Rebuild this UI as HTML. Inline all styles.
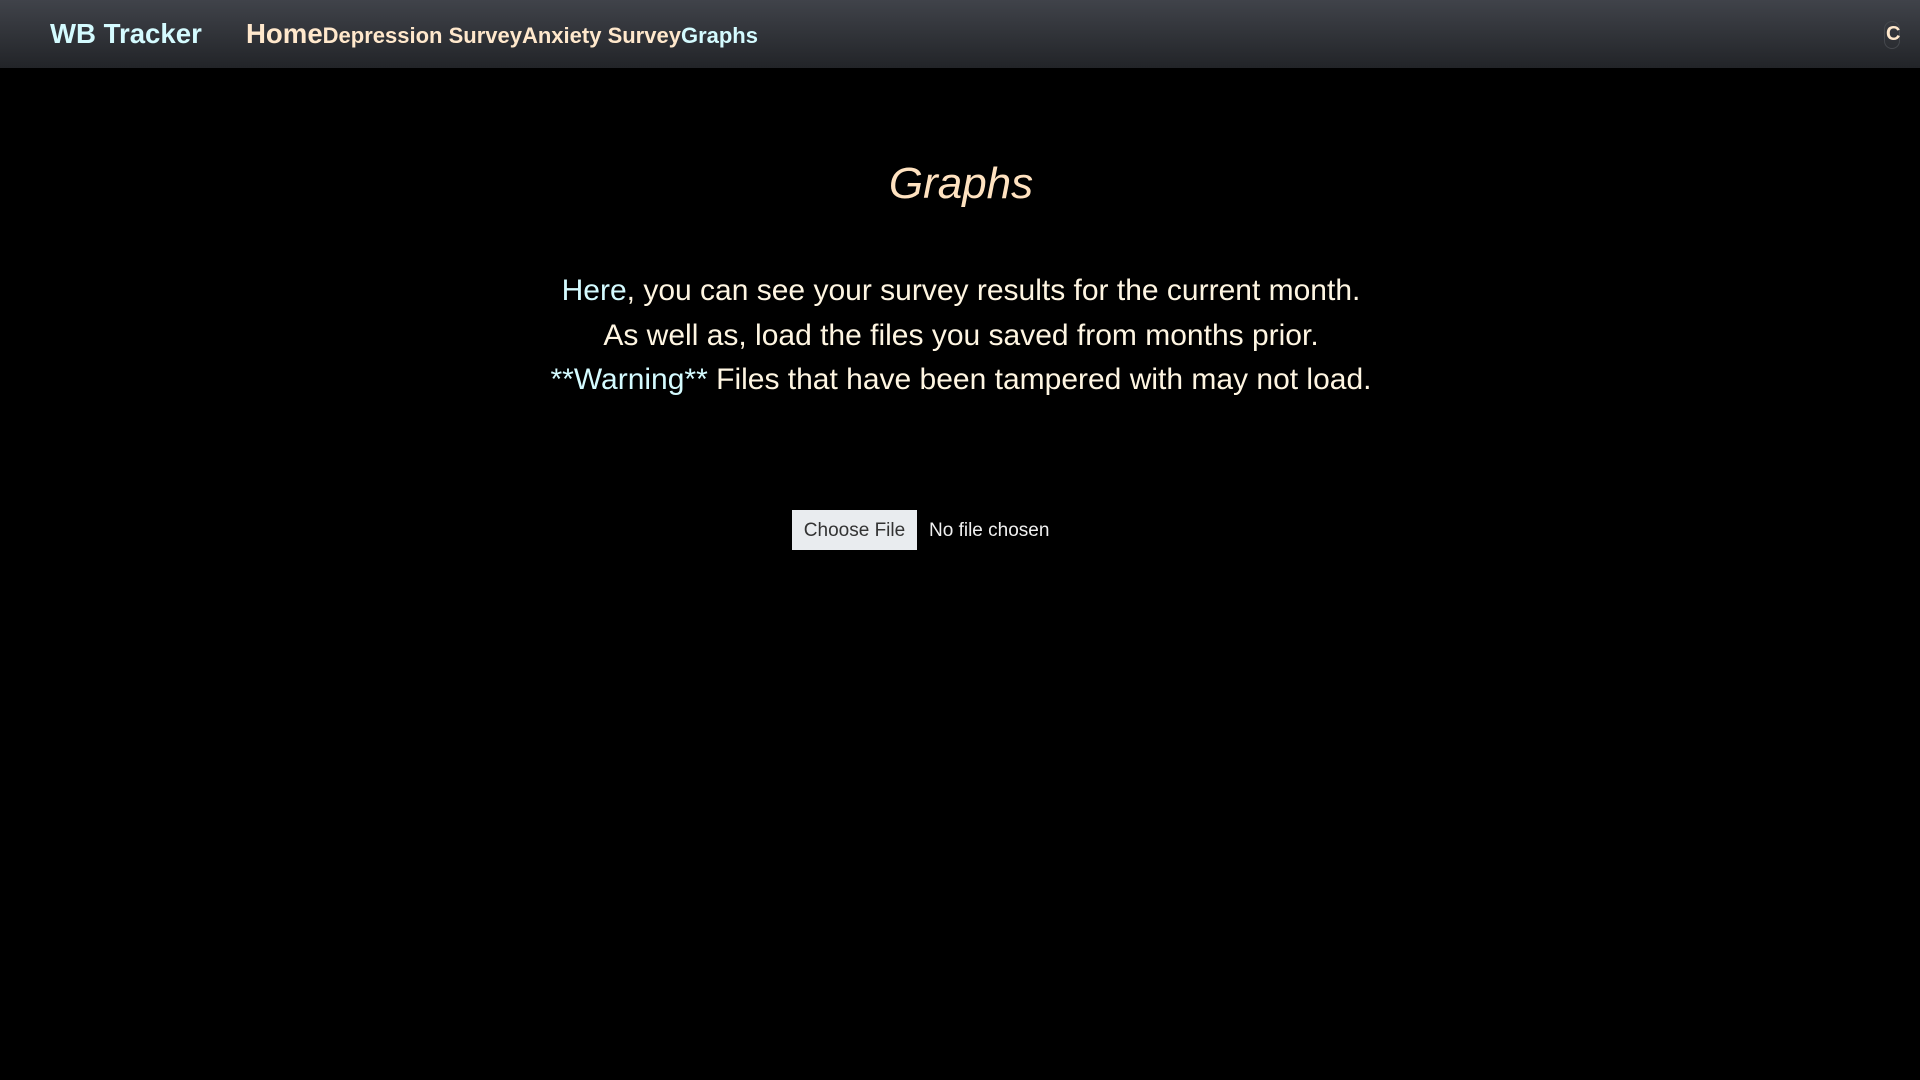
<!DOCTYPE html>
<html><head><meta charset="utf-8"><style>
*{margin:0;padding:0;box-sizing:border-box}
body{width:1920px;height:1080px;background:#000;font-family:"Liberation Sans",Arial,sans-serif;overflow:hidden;position:relative}
nav{position:absolute;left:0;top:0;width:1920px;height:68px;background:linear-gradient(#40434a,#222428)}
.t{position:absolute;white-space:nowrap;font-weight:bold}
.cy{color:#d4fbff}.bq{color:#ffe8cc}
p.l{position:absolute;left:0;width:1922px;text-align:center;font-size:30px;color:#fff6e2;white-space:nowrap}
</style></head><body>
<nav>
<div class="t cy" style="left:50px;top:18px;font-size:27.6px">WB Tracker</div>
<div class="t bq" style="left:246px;top:18px;font-size:27.6px">Home<span style="font-size:22px">Depression Survey</span><span style="font-size:22px">Anxiety Survey</span><span class="cy" style="font-size:22px">Graphs</span></div>
<div style="position:absolute;left:1884px;top:21px;width:16px;height:28px;border:1px solid #45484d;border-radius:8px"></div>
<div class="t bq" style="left:1886px;top:23px;font-size:20px">C</div>
</nav>
<div style="position:absolute;left:0;width:1922px;top:159px;text-align:center;font-style:italic;font-size:44px;color:#ffe2c0">Graphs</div>
<p class="l" style="top:274px"><span class="cy">Here</span>, you can see your survey results for the current month.</p>
<p class="l" style="top:319px">As well as, load the files you saved from months prior.</p>
<p class="l" style="top:363px"><span class="cy">**Warning**</span> Files that have been tampered with may not load.</p>
<div style="position:absolute;left:792px;top:510px;width:125px;height:40px;background:#e9ecef;color:#333;font-size:19px;line-height:41px;text-align:center">Choose File</div>
<div style="position:absolute;left:929px;top:510px;line-height:41px;font-size:19px;color:#f0f0f0">No file chosen</div>
</body></html>
